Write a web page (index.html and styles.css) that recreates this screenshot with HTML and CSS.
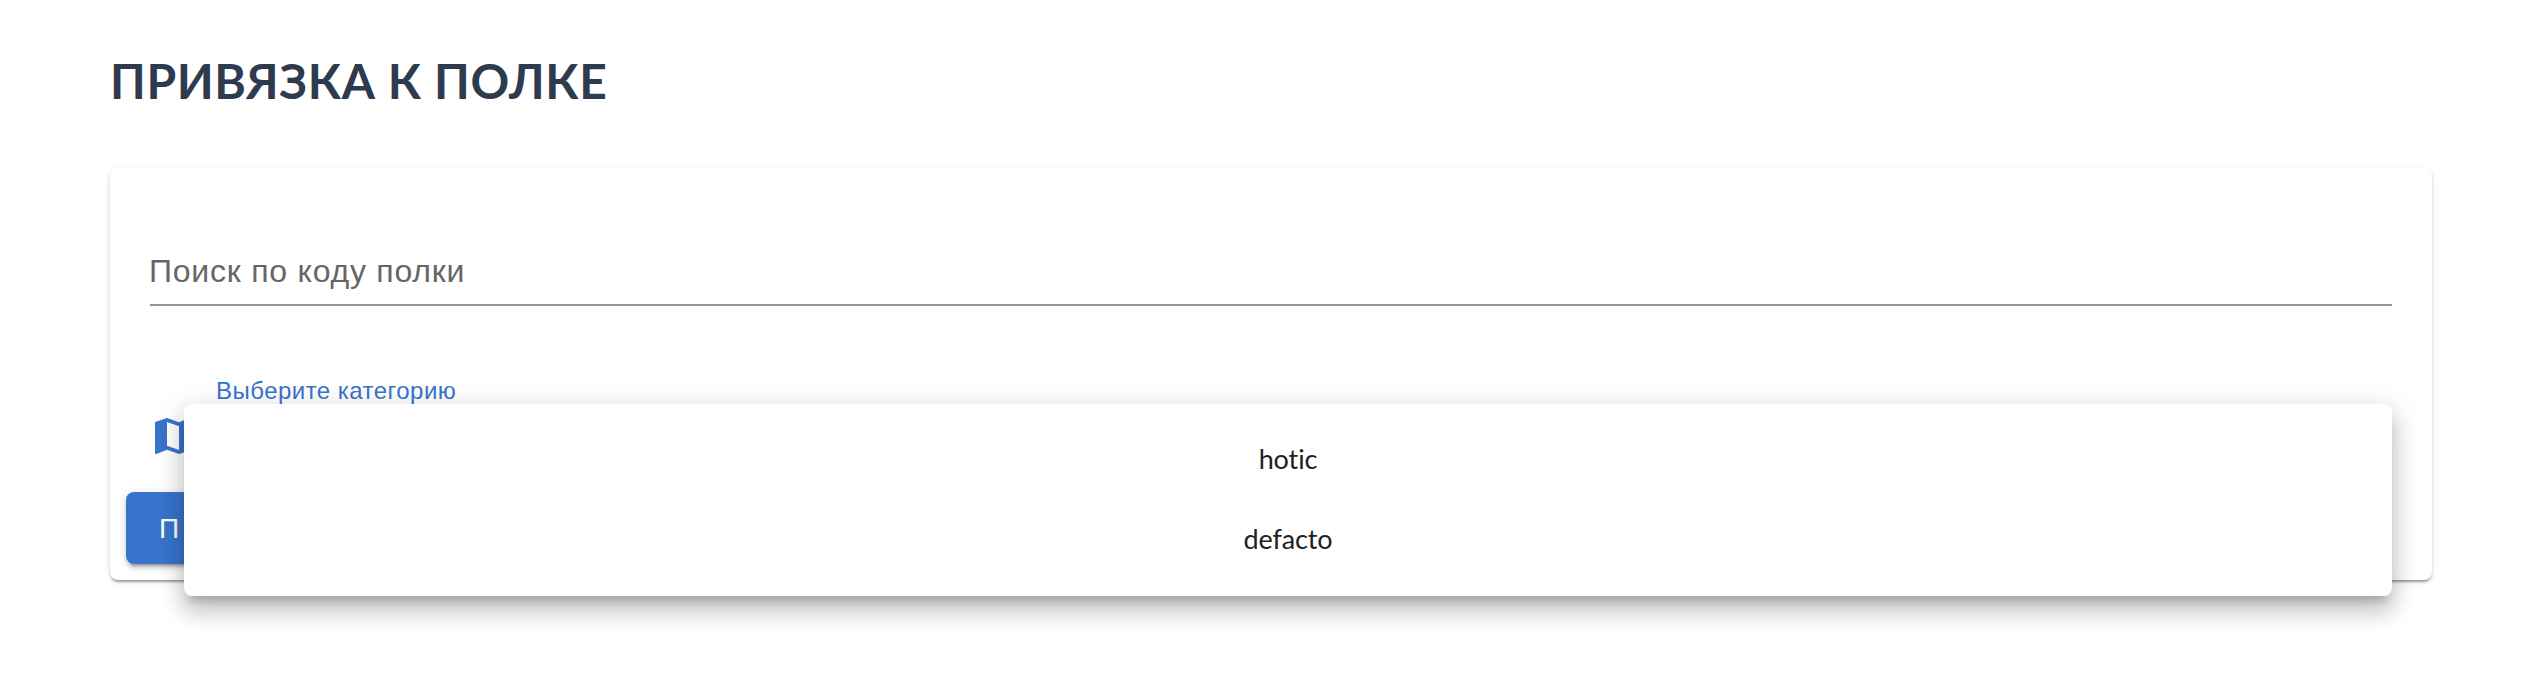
FILE: index.html
```html
<!DOCTYPE html>
<html lang="ru">
<head>
<meta charset="utf-8">
<title>Привязка к полке</title>
<link rel="stylesheet" href="styles.css">
</head>
<body>
<main class="page">
  <h1 class="title">ПРИВЯЗКА К ПОЛКЕ</h1>
  <section class="card">
    <div class="search">Поиск по коду полки</div>
    <div class="category">
      <svg class="map-icon" viewBox="0 0 24 24"><path d="m20.5 3-.16.03L15 5.1 9 3 3.360 4.900c-.21.07-.36.25-.36.480V20.500c0 .280.220.500.500.500l.160-.030L9 18.900l6 2.100 5.640-1.900c.210-.070.360-.250.360-.480V3.500c0-.280-.220-.500-.500-.500zM15 19l-6-2.110V5l6 2.110V19z"/></svg>
      <span class="category-label">Выберите категорию</span>
    </div>
    <button class="submit" type="button">П</button>
    <ul class="menu">
      <li class="option">hotic</li>
      <li class="option">defacto</li>
    </ul>
  </section>
</main>
</body>
</html>
```
FILE: styles.css
```css
* { box-sizing: border-box; }
body { margin: 0; background: #fff; }
.page {
  height: 682px;
  padding: 51px 112px 0 110px;
  overflow: hidden;
}
.title {
  height: 60px;
  margin: 0 0 57px;
  color: #2e3b4e;
  font: 700 48px/59px Lato, sans-serif;
  letter-spacing: .6px;
  white-space: nowrap;
}
.card {
  position: relative;
  height: 412px;
  padding: 64px 40px 16px;
  border-radius: 8px;
  background: #fff;
  box-shadow: 0 4px 2px -2px rgba(0,0,0,.2), 0 2px 2px rgba(0,0,0,.14), 0 2px 6px rgba(0,0,0,.12);
}
.search {
  height: 74px;
  padding-top: 19px;
  border-bottom: 2px solid #949494;
  color: #666;
  font: 32px/40px "Liberation Sans", Arial, sans-serif;
  letter-spacing: .77px;
  text-indent: -1px;
}
.category {
  display: flex;
  height: 186px;
  padding-top: 68px;
}
.map-icon {
  width: 48px;
  height: 48px;
  margin: 38px 19px 0 -1px;
  fill: #3874cb;
}
.category-label {
  height: 32px;
  padding-top: 1px;
  color: #3874cb;
  font: 24px/32px "Liberation Sans", Arial, sans-serif;
  letter-spacing: .47px;
}
.submit {
  display: block;
  width: 240px;
  height: 72px;
  margin-left: -24px;
  padding: 13px 32px 11px 33px;
  border: 0;
  border-radius: 8px;
  background: #3874cb;
  color: #fff;
  font: 28px/48px "Liberation Sans", Arial, sans-serif;
  text-align: left;
  box-shadow: 0 6px 2px -4px rgba(0,0,0,.2), 0 4px 4px rgba(0,0,0,.14), 0 2px 10px rgba(0,0,0,.12);
}
.menu {
  position: absolute;
  top: 236px;
  left: 74px;
  right: 40px;
  height: 192px;
  margin: 0;
  padding: 16px 0;
  border-radius: 8px;
  background: #fff;
  list-style: none;
  box-shadow: 0 10px 10px -6px rgba(0,0,0,.2), 0 16px 20px 2px rgba(0,0,0,.14), 0 6px 28px 4px rgba(0,0,0,.12);
}
.option {
  height: 80px;
  color: #212121;
  font: 27px/77px Lato, sans-serif;
  font-variant-ligatures: none;
  letter-spacing: -.1px;
  text-align: center;
}
```
